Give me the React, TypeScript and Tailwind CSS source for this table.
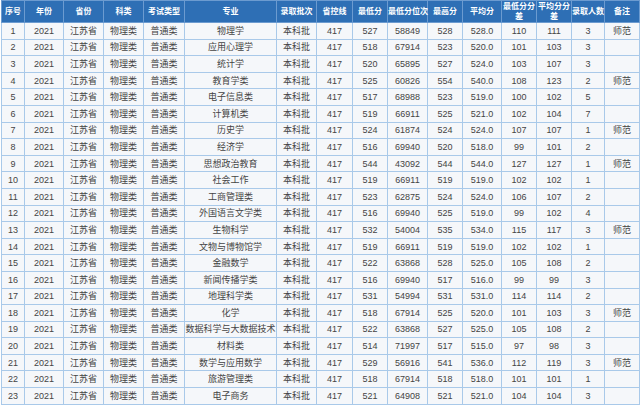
const cols = [
  { name: '序号', w: 23 },
  { name: '年份', w: 39 },
  { name: '省份', w: 40 },
  { name: '科类', w: 40 },
  { name: '考试类型', w: 41 },
  { name: '专业', w: 92 },
  { name: '录取批次', w: 40 },
  { name: '省控线', w: 36 },
  { name: '最低分', w: 35 },
  { name: '最低分位次', w: 40 },
  { name: '最高分', w: 35 },
  { name: '平均分', w: 39 },
  { name: '最低分分差', w: 35 },
  { name: '平均分分差', w: 35 },
  { name: '录取人数', w: 33 },
  { name: '备注', w: 35 },
]

// 专业, 最低分, 位次, 最高分, 平均分, 最低分差, 平均分差, 人数, 备注
const rows: [string, number, number, number, string, number, number, number, string][] = [
  ['物理学', 527, 58849, 528, '528.0', 110, 111, 3, '师范'],
  ['应用心理学', 518, 67914, 523, '520.0', 101, 103, 3, ''],
  ['统计学', 520, 65895, 527, '524.0', 103, 107, 3, ''],
  ['教育学类', 525, 60826, 554, '540.0', 108, 123, 2, '师范'],
  ['电子信息类', 517, 68988, 523, '519.0', 100, 102, 5, ''],
  ['计算机类', 519, 66911, 525, '521.0', 102, 104, 7, ''],
  ['历史学', 524, 61874, 524, '524.0', 107, 107, 1, '师范'],
  ['经济学', 516, 69940, 520, '518.0', 99, 101, 2, ''],
  ['思想政治教育', 544, 43092, 544, '544.0', 127, 127, 1, '师范'],
  ['社会工作', 519, 66911, 519, '519.0', 102, 102, 1, ''],
  ['工商管理类', 523, 62875, 524, '524.0', 106, 107, 2, ''],
  ['外国语言文学类', 516, 69940, 525, '519.0', 99, 102, 4, ''],
  ['生物科学', 532, 54004, 535, '534.0', 115, 117, 3, '师范'],
  ['文物与博物馆学', 519, 66911, 519, '519.0', 102, 102, 1, ''],
  ['金融数学', 522, 63868, 528, '525.0', 105, 108, 2, ''],
  ['新闻传播学类', 516, 69940, 517, '516.0', 99, 99, 3, ''],
  ['地理科学类', 531, 54994, 531, '531.0', 114, 114, 2, ''],
  ['化学', 518, 67914, 525, '520.0', 101, 103, 3, '师范'],
  ['数据科学与大数据技术', 522, 63868, 527, '525.0', 105, 108, 2, ''],
  ['材料类', 514, 71997, 517, '515.0', 97, 98, 3, ''],
  ['数学与应用数学', 529, 56916, 541, '536.0', 112, 119, 3, '师范'],
  ['旅游管理类', 518, 67914, 518, '518.0', 101, 101, 1, ''],
  ['电子商务', 521, 64908, 521, '521.0', 104, 104, 3, ''],
]

export default function App() {
  return (
    <div
      className="w-[640px] h-[406px] bg-white overflow-hidden pl-px"
      style={{ fontFamily: '"Liberation Sans", "Noto Sans CJK SC", sans-serif' }}
    >
      <table className="table-fixed border-collapse w-[637px]">
        <colgroup>
          {cols.map((c) => (
            <col key={c.name} style={{ width: c.w }} />
          ))}
        </colgroup>
        <thead>
          <tr className="h-[22px] bg-[#2e6fb5]">
            {cols.map((c) => (
              <th
                key={c.name}
                className={`border border-[#6c9bd0] px-0 text-[8px] leading-[10px] font-bold text-white text-center align-middle ${
                  c.name.endsWith('分差') ? 'whitespace-normal' : 'whitespace-nowrap'
                }`}
              >
                {c.name}
              </th>
            ))}
          </tr>
        </thead>
        <tbody>
          {rows.map((r, i) => (
            <tr key={i} className="h-[16.6px] bg-[#f5f7fa]">
              {[
                String(i + 1),
                '2021',
                '江苏省',
                '物理类',
                '普通类',
                r[0],
                '本科批',
                '417',
                String(r[1]),
                String(r[2]),
                String(r[3]),
                r[4],
                String(r[5]),
                String(r[6]),
                String(r[7]),
                r[8],
              ].map((v, j) => (
                <td
                  key={j}
                  className="border border-[#a9c9e9] p-0 text-[9px] leading-[10px] text-[#444] text-center align-middle whitespace-nowrap"
                >
                  {v}
                </td>
              ))}
            </tr>
          ))}
        </tbody>
      </table>
    </div>
  )
}
